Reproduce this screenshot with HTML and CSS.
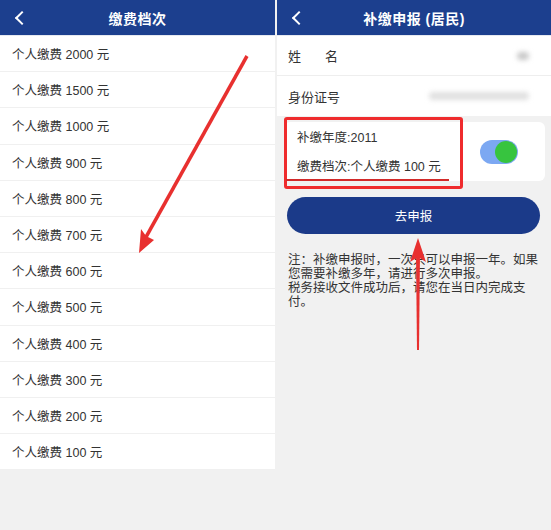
FILE: index.html
```html
<!DOCTYPE html>
<html lang="zh-CN">
<head>
    <meta charset="UTF-8">
    <meta name="viewport" content="width=device-width, initial-scale=1.0">
    <title>缴费档次</title>
    <link rel="stylesheet" href="styles.css">
</head>
<body>
    <div class="screens">
        <!-- 左侧：缴费档次 -->
        <div class="screen">
            <div class="header">
                <span class="back"></span>
                <span class="title">缴费档次</span>
            </div>
            <ul class="level-list">
                <li>个人缴费 2000 元</li>
                <li>个人缴费 1500 元</li>
                <li>个人缴费 1000 元</li>
                <li>个人缴费 900 元</li>
                <li>个人缴费 800 元</li>
                <li>个人缴费 700 元</li>
                <li>个人缴费 600 元</li>
                <li>个人缴费 500 元</li>
                <li>个人缴费 400 元</li>
                <li>个人缴费 300 元</li>
                <li>个人缴费 200 元</li>
                <li>个人缴费 100 元</li>
            </ul>
        </div>

        <!-- 右侧：补缴申报 -->
        <div class="screen">
            <div class="header">
                <span class="back"></span>
                <span class="title">补缴申报 (居民)</span>
            </div>
            <div class="info">
                <div class="info-row">
                    <span class="label spaced">姓<span class="gap"></span>名</span>
                    <span class="blur blur-name"></span>
                </div>
                <div class="info-row">
                    <span class="label">身份证号</span>
                    <span class="blur blur-id"></span>
                </div>
            </div>
            <div class="card">
                <div class="card-text">
                    <div>补缴年度:2011</div>
                    <div>缴费档次:个人缴费 100 元</div>
                </div>
                <div class="toggle"><span class="knob"></span></div>
                <div class="mark-box"></div>
                <div class="mark-line"></div>
            </div>
            <button class="btn" type="button">去申报</button>
            <p class="note">注：补缴申报时，一次只可以申报一年。如果您需要补缴多年，请进行多次申报。<br>税务接收文件成功后，请您在当日内完成支付。</p>
        </div>
    </div>

    <svg class="arrows" width="551" height="530" viewBox="0 0 551 530">
        <g fill="#e8302f" stroke="none">
            <path d="M245.5 55 L248.5 57 L147.5 238 L144.5 236 Z"/>
            <path d="M139 253 L141 229 L146 236 L154 240 Z"/>
            <path d="M416 255 L420 255 L419 350 L417 350 Z"/>
            <path d="M418 238 L426 262 L418 257 L410 262 Z"/>
        </g>
    </svg>
</body>
</html>
```

FILE: styles.css
```css
* {
    box-sizing: border-box;
    margin: 0;
    padding: 0;
    font-family: "Liberation Sans", "Noto Sans CJK SC", sans-serif;
}

body {
    background-color: #f1f1f1;
    color: #333;
    width: 551px;
    height: 530px;
    overflow: hidden;
    position: relative;
}

.screens {
    display: grid;
    grid-template-columns: 275px 274px;
    column-gap: 2px;
    height: 530px;
}

.screen {
    background-color: #f1f1f1;
}

.header {
    height: 36px;
    background-color: #1c3f8e;
    color: white;
    display: flex;
    align-items: center;
    justify-content: center;
    position: relative;
    border-bottom: 1px solid #e6e9f0;
}

.title {
    font-size: 14px;
    font-weight: 700;
    letter-spacing: 0.5px;
}

.back {
    position: absolute;
    left: 17px;
    top: 13px;
    width: 10px;
    height: 10px;
    border-left: 2.5px solid white;
    border-bottom: 2.5px solid white;
    transform: rotate(45deg);
}

.level-list {
    list-style: none;
    background: white;
}

.level-list li {
    height: 36.2px;
    line-height: 38px;
    padding-left: 12px;
    font-size: 12.5px;
    border-bottom: 1px solid #f0f0f0;
}

.info {
    background: white;
}

.info-row {
    height: 40px;
    display: flex;
    align-items: center;
    justify-content: space-between;
    padding: 0 22px 0 11px;
    font-size: 13px;
    border-bottom: 1px solid #eeeeee;
}

.info-row:last-child {
    border-bottom: none;
}

.gap {
    display: inline-block;
    width: 24px;
}

.blur {
    display: block;
    height: 8px;
    background: #c8c8c8;
    filter: blur(2.5px);
    border-radius: 4px;
}

.blur-name {
    width: 12px;
}

.blur-id {
    width: 100px;
    background: #e0e0e0;
}

.card {
    margin: 6px 6px 0 7px;
    height: 59px;
    background: white;
    border-radius: 6px;
    display: flex;
    align-items: center;
    justify-content: space-between;
    padding: 0 27px 0 13px;
    position: relative;
}

.card-text {
    font-size: 12.5px;
    line-height: 29px;
    margin-top: 3px;
}

.toggle {
    width: 38px;
    height: 24px;
    border-radius: 12px;
    background: #7ca8f2;
    position: relative;
}

.knob {
    position: absolute;
    right: 1px;
    top: 1px;
    width: 22px;
    height: 22px;
    border-radius: 50%;
    background: #37c43f;
}

.mark-box {
    position: absolute;
    left: 0;
    top: -5px;
    width: 179px;
    height: 72px;
    border: 3px solid #ef2b2d;
    border-radius: 3px;
}

.mark-line {
    position: absolute;
    left: 2px;
    top: 57px;
    width: 163px;
    height: 2px;
    background: #d22a2a;
}

.btn {
    display: block;
    margin: 16px 11px 0 10px;
    width: 253px;
    height: 37px;
    border: none;
    border-radius: 19px;
    background: #1b3a89;
    color: white;
    font-size: 12.5px;
}

.note {
    margin: 19px 0 0 11px;
    width: 253px;
    font-size: 12.5px;
    line-height: 14px;
    color: #333;
}

.arrows {
    position: absolute;
    left: 0;
    top: 0;
    pointer-events: none;
}
```
